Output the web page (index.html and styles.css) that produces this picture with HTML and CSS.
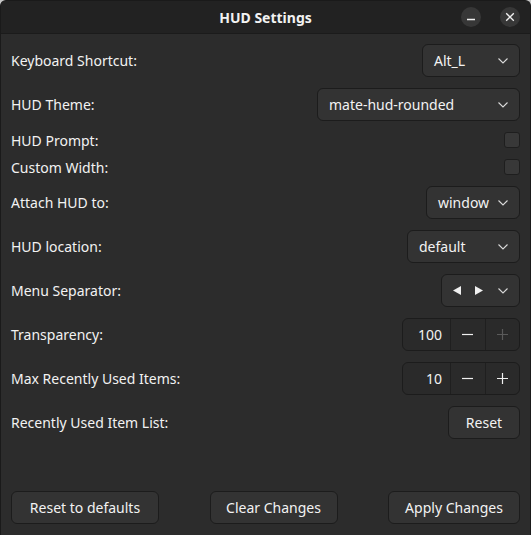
FILE: index.html
```html
<!DOCTYPE html>
<html lang="en">
<head>
<meta charset="utf-8">
<title>HUD Settings</title>
<link rel="stylesheet" href="styles.css">
</head>
<body>
<div class="window">
  <header class="titlebar">
    <span class="spacer"></span>
    <span class="title">HUD Settings</span>
    <div class="title-buttons">
      <span class="tbtn">
        <svg width="10" height="10" viewBox="0 0 10 10"><path d="M1 7.5H9" stroke="#f0f0f0" stroke-width="1.6"/></svg>
      </span>
      <span class="tbtn">
        <svg width="10" height="10" viewBox="0 0 10 10"><path d="M1.2 1.2L8.8 8.8M8.8 1.2L1.2 8.8" stroke="#f0f0f0" stroke-width="1.3"/></svg>
      </span>
    </div>
  </header>

  <main class="content">
    <div class="form">
      <div class="row">
        <span class="label">Keyboard Shortcut:</span>
        <div class="combo combo-alt"><span class="combo-text">Alt_L</span><svg class="chev" width="10" height="6" viewBox="0 0 10 6"><path d="M0.5 0.5L5 5L9.5 0.5" fill="none" stroke="#d8d8d8" stroke-width="1.1"/></svg></div>
      </div>
      <div class="row">
        <span class="label">HUD Theme:</span>
        <div class="combo combo-theme"><span class="combo-text">mate-hud-rounded</span><svg class="chev" width="10" height="6" viewBox="0 0 10 6"><path d="M0.5 0.5L5 5L9.5 0.5" fill="none" stroke="#d8d8d8" stroke-width="1.1"/></svg></div>
      </div>
      <div class="row row-small">
        <span class="label">HUD Prompt:</span>
        <span class="check"></span>
      </div>
      <div class="row row-small">
        <span class="label">Custom Width:</span>
        <span class="check"></span>
      </div>
      <div class="row">
        <span class="label">Attach HUD to:</span>
        <div class="combo combo-window"><span class="combo-text">window</span><svg class="chev" width="10" height="6" viewBox="0 0 10 6"><path d="M0.5 0.5L5 5L9.5 0.5" fill="none" stroke="#d8d8d8" stroke-width="1.1"/></svg></div>
      </div>
      <div class="row">
        <span class="label">HUD location:</span>
        <div class="combo combo-default"><span class="combo-text">default</span><svg class="chev" width="10" height="6" viewBox="0 0 10 6"><path d="M0.5 0.5L5 5L9.5 0.5" fill="none" stroke="#d8d8d8" stroke-width="1.1"/></svg></div>
      </div>
      <div class="row">
        <span class="label">Menu Separator:</span>
        <div class="combo combo-sep">
          <span class="combo-text sep-text">
            <svg width="8" height="9" viewBox="0 0 8 9"><path d="M0 4.5L8 0V9Z" fill="#f0f0f0"/></svg>
            <svg width="8" height="9" viewBox="0 0 8 9"><path d="M8 4.5L0 0V9Z" fill="#f0f0f0"/></svg>
          </span>
          <svg class="chev" width="10" height="6" viewBox="0 0 10 6"><path d="M0.5 0.5L5 5L9.5 0.5" fill="none" stroke="#d8d8d8" stroke-width="1.1"/></svg>
        </div>
      </div>
      <div class="row">
        <span class="label">Transparency:</span>
        <div class="spin">
          <span class="spin-value">100</span>
          <span class="spin-btn"><svg width="11" height="11" viewBox="0 0 11 11"><path d="M0 5.5H11" stroke="#f0f0f0" stroke-width="1.2"/></svg></span>
          <span class="spin-btn disabled"><svg width="11" height="11" viewBox="0 0 11 11"><path d="M0 5.5H11M5.5 0V11" stroke="#5a5a5a" stroke-width="1.2"/></svg></span>
        </div>
      </div>
      <div class="row">
        <span class="label">Max Recently Used Items:</span>
        <div class="spin">
          <span class="spin-value">10</span>
          <span class="spin-btn"><svg width="11" height="11" viewBox="0 0 11 11"><path d="M0 5.5H11" stroke="#f0f0f0" stroke-width="1.2"/></svg></span>
          <span class="spin-btn"><svg width="11" height="11" viewBox="0 0 11 11"><path d="M0 5.5H11M5.5 0V11" stroke="#f0f0f0" stroke-width="1.2"/></svg></span>
        </div>
      </div>
      <div class="row">
        <span class="label">Recently Used Item List:</span>
        <span class="btn btn-reset">Reset</span>
      </div>
    </div>

    <div class="actions">
      <span class="btn btn-defaults">Reset to defaults</span>
      <span class="btn btn-clear">Clear Changes</span>
      <span class="btn btn-apply">Apply Changes</span>
    </div>
  </main>
</div>
</body>
</html>
```

FILE: styles.css
```css
* {
  box-sizing: border-box;
}

html {
  background: #c8c8c8;
}

body {
  margin: 0;
  font-family: "Noto Sans", "Open Sans", sans-serif;
  font-size: 14px;
  color: #f2f2f2;
}

.window {
  width: 531px;
  height: 535px;
  display: flex;
  flex-direction: column;
  background: #2c2c2c;
  border: 1px solid #1a1a1a;
  border-bottom: none;
  border-radius: 6px 6px 0 0;
  overflow: hidden;
}

.titlebar {
  height: 33px;
  flex: none;
  display: grid;
  grid-template-columns: 1fr auto 1fr;
  align-items: center;
  background: #222222;
  border-bottom: 1px solid #1b1b1b;
  padding: 0 10px;
}

.title {
  font-weight: 700;
  font-size: 14px;
}

.title-buttons {
  display: flex;
  justify-content: flex-end;
  gap: 19px;
}

.tbtn {
  width: 20px;
  height: 20px;
  border-radius: 50%;
  background: #373737;
  display: flex;
  align-items: center;
  justify-content: center;
}

.content {
  flex: 1;
  display: flex;
  flex-direction: column;
  justify-content: space-between;
  padding: 10px 10px 11px 10px;
}

.form {
  display: flex;
  flex-direction: column;
  gap: 11px;
}

.row {
  height: 33px;
  display: flex;
  align-items: center;
  justify-content: space-between;
}

.row-small {
  height: 16px;
}

.combo,
.btn,
.spin {
  height: 33px;
  border: 1px solid #1c1c1c;
  border-radius: 6px;
  background: #333333;
  white-space: nowrap;
}

.combo {
  display: flex;
  align-items: center;
  justify-content: space-between;
  padding: 0 11px;
}

.chev {
  flex: none;
  margin-top: 1px;
}

.combo-alt { width: 98px; }
.combo-theme { width: 203px; }
.combo-window { width: 94px; }
.combo-default { width: 113px; }
.combo-sep { width: 79px; }

.sep-text {
  display: flex;
  gap: 14px;
  align-items: center;
}

.check {
  width: 16px;
  height: 16px;
  border: 1px solid #1e1e1e;
  border-radius: 3px;
  background: #383838;
}

.spin {
  width: 118px;
  display: flex;
  background: #2a2a2a;
}

.spin-value {
  width: 47px;
  text-align: right;
  padding-right: 8px;
  align-self: center;
}

.spin-btn {
  flex: 1;
  display: flex;
  align-items: center;
  justify-content: center;
  border-left: 1px solid #1f1f1f;
}

.btn {
  display: flex;
  align-items: center;
  justify-content: center;
  padding: 0;
}

.btn-reset { width: 72px; }

.actions {
  display: flex;
  justify-content: space-between;
  align-items: center;
}

.btn-defaults { width: 148px; }
.btn-clear { width: 128px; }
.btn-apply { width: 132px; }
```
